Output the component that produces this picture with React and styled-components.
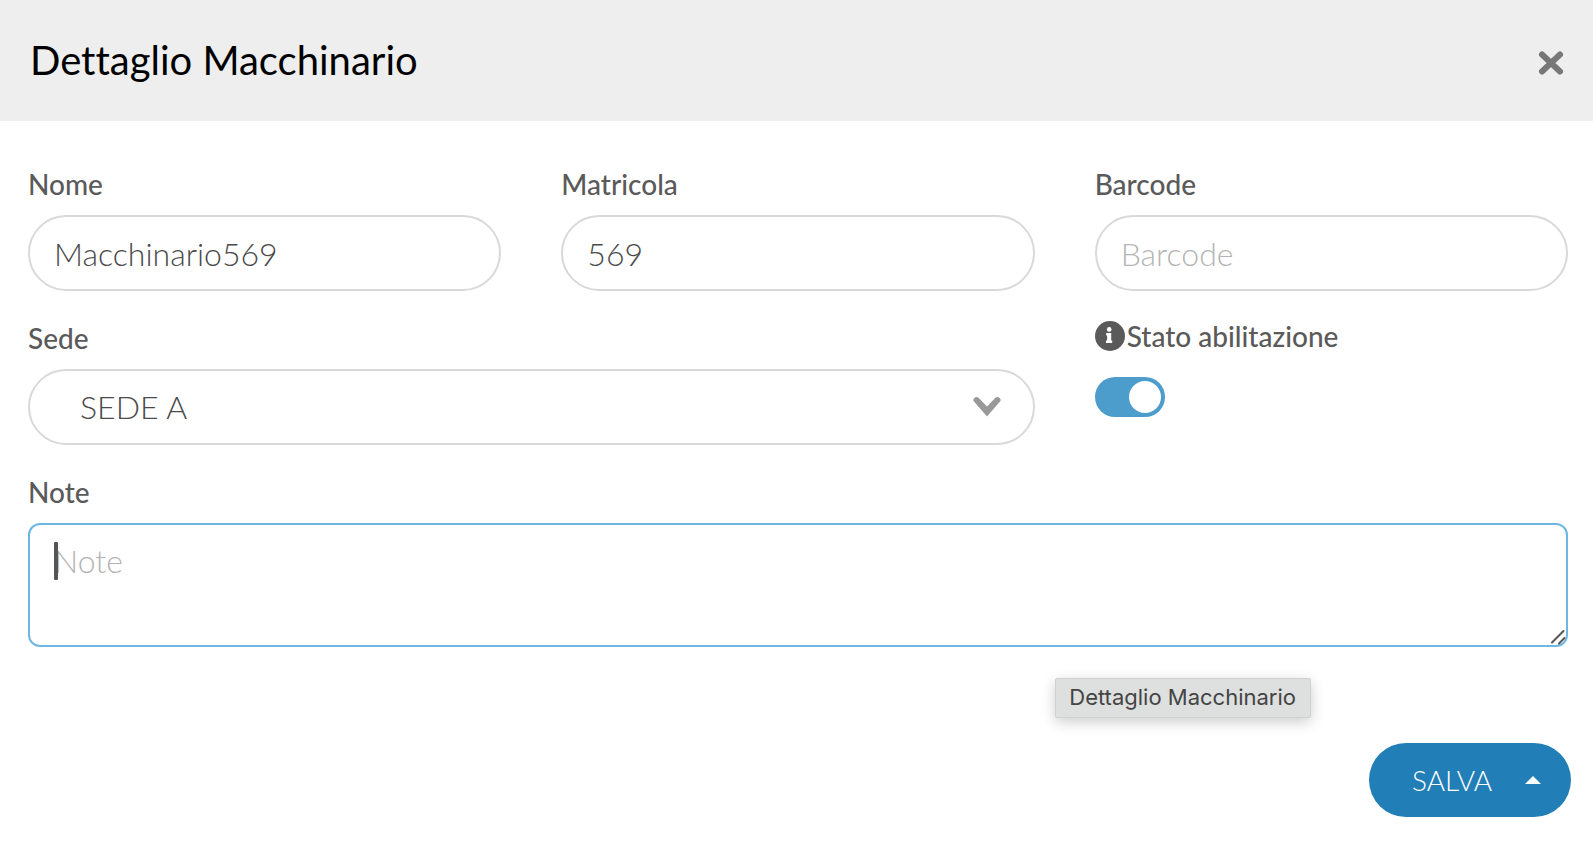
import React from 'react';
import styled, { createGlobalStyle } from 'styled-components';

const Global = createGlobalStyle`
  *, *::before, *::after { box-sizing: border-box; }
  body {
    margin: 0; background: #fff; color: #555; font-family: Lato, sans-serif;
    font-variant-ligatures: none; -webkit-font-smoothing: antialiased;
  }
`;
const Header = styled.header`
  display: flex; align-items: center; justify-content: space-between;
  background: #eee; padding: 32px 28px 33px 30px;
`;
const Title = styled.h1`
  margin: 0; font-size: 40px; line-height: 56px; font-weight: 400; color: #000;
`;
const CloseButton = styled.button`
  display: flex; border: 0; padding: 6px 0 0; background: none; color: #777; cursor: pointer;
`;
const Form = styled.form`
  display: grid; grid-template-columns: repeat(3, 1fr); column-gap: 60px; row-gap: 30px;
  padding: 46px 25px 0 28px;
`;
const Field = styled.div`
  display: flex; flex-direction: column; gap: 14px; min-width: 0;
  grid-column: span ${(p) => p.$span || 1};
`;
const SwitchField = styled(Field)`
  gap: 26px;
`;
const Label = styled.label`
  display: flex; align-items: center; font-size: 28px; line-height: 34px; font-weight: 500; color: #5a5a5a;
`;
const SwitchLabel = styled(Label)`
  line-height: 30px; gap: 2px;
`;
const Input = styled.input`
  width: 100%; height: 76px; border: 2px solid #d9d9d9; border-radius: 38px; background: #fff;
  padding: 0 24px; font: 300 32px/40px Lato, sans-serif; color: #4a4a4a; outline: 0;
  &::placeholder { color: #b4b4b4; opacity: 1; }
`;
const SelectBox = styled.div`
  display: grid; align-items: center;
  > * { grid-area: 1 / 1; }
  svg { justify-self: end; margin-right: 34px; pointer-events: none; }
`;
const Select = styled(Input).attrs({ as: 'select' })`
  appearance: none; padding: 0 50px;
`;
const NoteBox = styled.div`
  position: relative;
`;
const TextArea = styled(Input).attrs({ as: 'textarea' })`
  display: block; height: 124px; border-color: #6db7e2; border-radius: 12px; padding: 16px 24px;
  resize: vertical; caret-color: transparent;
  &::-webkit-resizer { background: transparent; }
`;
const Caret = styled.span`
  position: absolute; left: 26px; top: 19px; width: 4px; height: 38px; border-radius: 1px;
  background: #555; pointer-events: none;
`;
const Grip = styled.svg`
  position: absolute; right: 2px; bottom: 2px; pointer-events: none;
`;
const Switch = styled.input`
  appearance: none; display: flex; width: 70px; height: 40px; margin: 0; padding: 4px; border-radius: 20px;
  background: #4c9dcb; justify-content: flex-end; cursor: pointer;
  &::before { content: ''; width: 32px; height: 32px; border-radius: 50%; background: #fff; }
  &:not(:checked) { background: #bbb; justify-content: flex-start; }
`;
const Footer = styled.footer`
  display: flex; flex-direction: column; align-items: flex-end; gap: 25px; padding: 31px 22px 32px;
`;
const Tooltip = styled.div`
  margin-right: 260px; padding: 0 14px 2px 13px; border: 1px solid #cfd1d0; border-radius: 2px;
  background: #dde0df; color: #444; font: 400 22px/36px Inter, sans-serif;
  box-shadow: 0 4px 14px rgba(0, 0, 0, .2);
`;
const SaveButton = styled.button`
  display: flex; align-items: center; gap: 33px; height: 74px; padding: 0 30px 0 43px; border: 0; border-radius: 37px;
  background: #217eb6; color: #fff; font: 300 28px/36px Lato, sans-serif; cursor: pointer;
`;

export default function App() {
  return (
    <>
      <Global />
      <Header>
        <Title>Dettaglio Macchinario</Title>
        <CloseButton type="button" aria-label="Chiudi">
          <svg width="28" height="28" viewBox="0 0 28 28">
            <path d="M5 5.5L23 22.5M23 5.5L5 22.5" stroke="currentColor" strokeWidth="6" strokeLinecap="round" />
          </svg>
        </CloseButton>
      </Header>
      <Form id="machine">
        <Field><Label htmlFor="nome">Nome</Label><Input id="nome" defaultValue="Macchinario569" /></Field>
        <Field><Label htmlFor="matricola">Matricola</Label><Input id="matricola" defaultValue="569" /></Field>
        <Field><Label htmlFor="barcode">Barcode</Label><Input id="barcode" placeholder="Barcode" /></Field>
        <Field $span={2}>
          <Label htmlFor="sede">Sede</Label>
          <SelectBox>
            <Select id="sede"><option>SEDE A</option></Select>
            <svg width="28" height="22" viewBox="0 0 28 22">
              <path d="M1.2 5.8Q-.6 4 1.2 2.2Q3.5 0 5.8 2L14 10.6L22.2 2Q24.5 0 26.8 2.2Q28.6 4 26.8 5.8L14 20.5Z" fill="#999" />
            </svg>
          </SelectBox>
        </Field>
        <SwitchField>
          <SwitchLabel htmlFor="stato">
            <svg width="30" height="30" viewBox="0 0 30 30">
              <circle cx="15" cy="15" r="15" fill="#5a5a5a" />
              <path d="M11.2 12h5v7.6h1v2.4h-6.2v-2.4h1.1v-5.2h-.9z" fill="#fff" />
              <circle cx="14.2" cy="8.4" r="2.3" fill="#fff" />
            </svg>
            Stato abilitazione
          </SwitchLabel>
          <Switch id="stato" type="checkbox" role="switch" defaultChecked />
        </SwitchField>
        <Field $span={3}>
          <Label htmlFor="note">Note</Label>
          <NoteBox>
            <TextArea id="note" placeholder="Note" />
            <Caret aria-hidden="true" />
            <Grip width="16" height="16" viewBox="0 0 16 16" aria-hidden="true">
              <path d="M2 13.5L13.5 2M9 14.5L14.5 9" stroke="#555" strokeWidth="2" strokeLinecap="round" />
            </Grip>
          </NoteBox>
        </Field>
      </Form>
      <Footer>
        <Tooltip role="tooltip">Dettaglio Macchinario</Tooltip>
        <SaveButton type="submit" form="machine">
          SALVA
          <svg width="16" height="8" viewBox="0 0 16 8"><path d="M0 8L8 0L16 8Z" fill="currentColor" /></svg>
        </SaveButton>
      </Footer>
    </>
  );
}
